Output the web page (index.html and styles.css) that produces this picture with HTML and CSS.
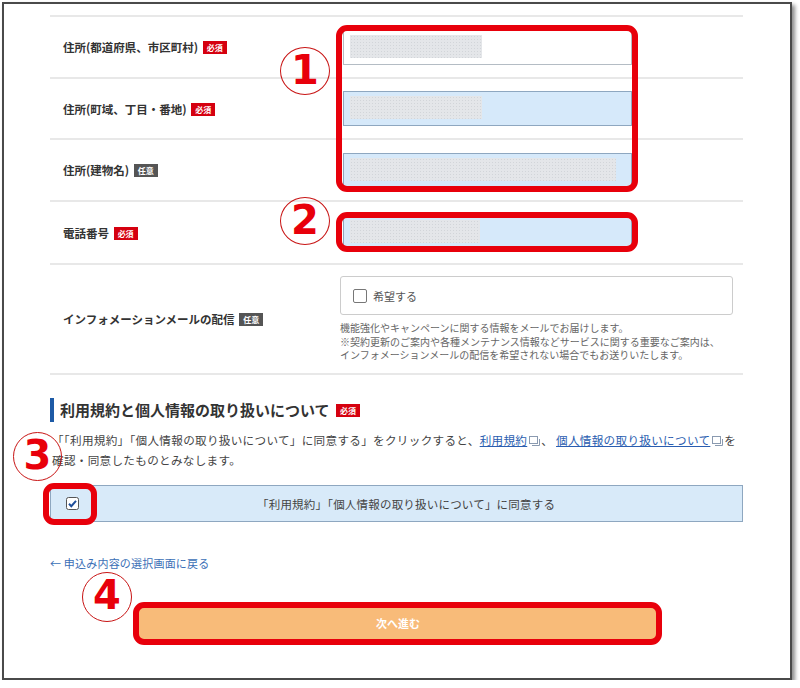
FILE: index.html
```html
<!DOCTYPE html>
<html lang="ja">
<head>
<meta charset="utf-8">
<title>申込みフォーム</title>
<link rel="stylesheet" href="styles.css">
</head>
<body>
<div class="frame">
  <div class="content">
    <div class="row r1">
      <div class="label">住所(都道府県、市区町村) <span class="badge req">必須</span></div>
      <div class="field"><div class="input white"><span class="blur w132"></span></div></div>
    </div>
    <div class="row r2">
      <div class="label">住所(町域、丁目・番地) <span class="badge req">必須</span></div>
      <div class="field"><div class="input"><span class="blur w132"></span></div></div>
    </div>
    <div class="row r3">
      <div class="label">住所(建物名) <span class="badge opt">任意</span></div>
      <div class="field"><div class="input"><span class="blur w266"></span></div></div>
    </div>
    <div class="row r4">
      <div class="label">電話番号 <span class="badge req">必須</span></div>
      <div class="field"><div class="input"><span class="blur w130"></span></div></div>
    </div>
    <div class="row r5">
      <div class="label">インフォメーションメールの配信 <span class="badge opt">任意</span></div>
      <div class="field">
        <div class="optbox"><span class="cb"></span><span>希望する</span></div>
        <p class="help">機能強化やキャンペーンに関する情報をメールでお届けします。<br>※契約更新のご案内や各種メンテナンス情報などサービスに関する重要なご案内は、<br>インフォメーションメールの配信を希望されない場合でもお送りいたします。</p>
      </div>
    </div>

    <h2 class="heading">利用規約と個人情報の取り扱いについて <span class="badge req">必須</span></h2>
    <p class="terms">「「利用規約」「個人情報の取り扱いについて」に同意する」をクリックすると、<a class="link">利用規約</a><svg class="ext" width="11" height="10" viewBox="0 0 11 10"><rect x="0.5" y="0.5" width="8" height="7" fill="none" stroke="#8a9ab0"/><path d="M3 9.5h7.5V3" fill="none" stroke="#8a9ab0"/></svg>、 <a class="link">個人情報の取り扱いについて</a><svg class="ext" width="11" height="10" viewBox="0 0 11 10"><rect x="0.5" y="0.5" width="8" height="7" fill="none" stroke="#8a9ab0"/><path d="M3 9.5h7.5V3" fill="none" stroke="#8a9ab0"/></svg>を<br>確認・同意したものとみなします。</p>

    <div class="agree">
      <svg class="chk" width="13" height="13" viewBox="0 0 13 13"><rect x="0.5" y="0.5" width="12" height="12" rx="2" fill="#fff" stroke="#555"/><path d="M3 6.8l2.3 2.4L10 3.8" fill="none" stroke="#1f4f9a" stroke-width="2"/></svg>
      <span class="agree-text">「利用規約」「個人情報の取り扱いについて」に同意する</span>
    </div>

    <a class="back">← 申込み内容の選択画面に戻る</a>

    <div class="btn">次へ進む</div>
  </div>

  <div class="mark box1"></div>
  <div class="mark box2"></div>
  <div class="mark box3"></div>
  <div class="mark box4"></div>
  <div class="num n1">1</div>
  <div class="num n2">2</div>
  <div class="num n3">3</div>
  <div class="num n4">4</div>
</div>
</body>
</html>
```

FILE: styles.css
```css
* { box-sizing: border-box; }
html, body { margin: 0; padding: 0; background: #fff; }
body {
  font-family: "Noto Sans CJK JP", "Noto Sans", sans-serif;
  color: #333;
}
.frame {
  position: relative;
  margin: 2px 0 0 2px;
  width: 790px;
  height: 678px;
  border: 2px solid #4a4a4a;
  box-shadow: 3px 3px 4px rgba(0,0,0,0.45);
  background: #fff;
}
.content {
  padding: 11px 0 0 46px;
  width: 739px;
}
.row {
  display: grid;
  grid-template-columns: 293px 1fr;
  align-items: center;
  border-top: 2px solid #e8e8e8;
}
.r1 { height: 62px; }
.r2 { height: 61px; }
.r3 { height: 62px; }
.r4 { height: 63px; }
.r5 { height: 112px; border-bottom: 2px solid #e8e8e8; align-items: start; }
.r5 .label { align-self: center; }
.label {
  padding-left: 13px;
  font-size: 11.5px;
  font-weight: bold;
  color: #333;
  white-space: nowrap;
}
.badge {
  display: inline-block;
  vertical-align: 1px;
  margin-left: 2px;
  padding: 0 4px;
  height: 13px;
  line-height: 13px;
  font-size: 8px;
  font-weight: bold;
  color: #fff;
}
.badge.req { background: #d5000f; }
.badge.opt { background: #555; }
.field { display: flex; flex-direction: column; }
.input {
  width: 289px;
  height: 35px;
  background: #d6e9fa;
  border: 1px solid #8ea7c0;
  padding: 4px 6px;
}
.input.white { background: #fff; border-color: #b4bcc4; }
.blur {
  display: block;
  height: 23px;
  background-color: #e4e6e9;
  background-image: radial-gradient(#d2d5d9 0.8px, transparent 1px);
  background-size: 3px 3px;
}
.w132 { width: 132px; }
.w266 { width: 266px; }
.w130 { width: 130px; }
.optbox {
  margin-top: 11px;
  margin-left: -3px;
  width: 393px;
  height: 39px;
  border: 1px solid #ccc;
  border-radius: 3px;
  display: flex;
  align-items: center;
  padding-left: 12px;
  font-size: 11px;
  color: #555;
  gap: 6px;
}
.cb {
  width: 14px;
  height: 14px;
  border: 1px solid #777;
  border-radius: 2px;
  background: #fff;
}
.help {
  margin: 6px 0 0 -3px;
  font-size: 10px;
  line-height: 13.5px;
  color: #666;
  white-space: nowrap;
}
.heading {
  margin: 23px 0 0 0;
  border-left: 4px solid #1d5aa6;
  padding-left: 6px;
  height: 24px;
  line-height: 24px;
  font-size: 15px;
  font-weight: bold;
  color: #333;
}
.heading .badge { vertical-align: 2px; margin-left: 3px; }
.terms {
  margin: 8px 0 0 2px;
  font-size: 11.6px;
  letter-spacing: 0.3px;
  line-height: 20px;
  color: #444;
  white-space: nowrap;
}
.link { color: #2a5db0; text-decoration: underline; }
.ext { vertical-align: -1px; margin: 0 1px 0 2px; }
.agree {
  margin-top: 15px;
  height: 37px;
  border: 1px solid #8ea7c0;
  background: #d8eaf9;
  display: flex;
  align-items: center;
  padding-left: 15px;
}
.agree-text {
  margin-left: 178px;
  font-size: 11.5px;
  letter-spacing: 0.2px;
  color: #444;
}
.back {
  display: block;
  margin-top: 33px;
  font-size: 11px;
  line-height: 16px;
  letter-spacing: 0.2px;
  color: #3b6fb6;
}
.btn {
  margin: 34px 0 0 88px;
  width: 520px;
  height: 36px;
  background: #f8bb79;
  color: #fff;
  font-size: 11px;
  font-weight: bold;
  text-align: center;
  line-height: 36px;
}
.mark {
  position: absolute;
  border: 6px solid #e8000b;
  border-radius: 11px;
}
.box1 { left: 332px; top: 21px; width: 302px; height: 167px; }
.box2 { left: 332px; top: 208px; width: 302px; height: 40px; }
.box3 { left: 39px; top: 479px; width: 54px; height: 42px; }
.box4 { left: 129px; top: 598px; width: 529px; height: 43px; }
.num {
  position: absolute;
  width: 50px;
  height: 48px;
  border: 1.5px solid #c81414;
  border-radius: 50%;
  color: #e8000b;
  font-family: "DejaVu Sans", sans-serif;
  font-weight: bold;
  font-size: 40px;
  line-height: 45px;
  text-align: center;
}
.n1 { left: 276px; top: 43px; }
.n2 { left: 276px; top: 193px; }
.n3 { left: 9px; top: 428px; width: 49px; height: 49px; }
.n4 { left: 78px; top: 568px; width: 50px; height: 50px; }
```
